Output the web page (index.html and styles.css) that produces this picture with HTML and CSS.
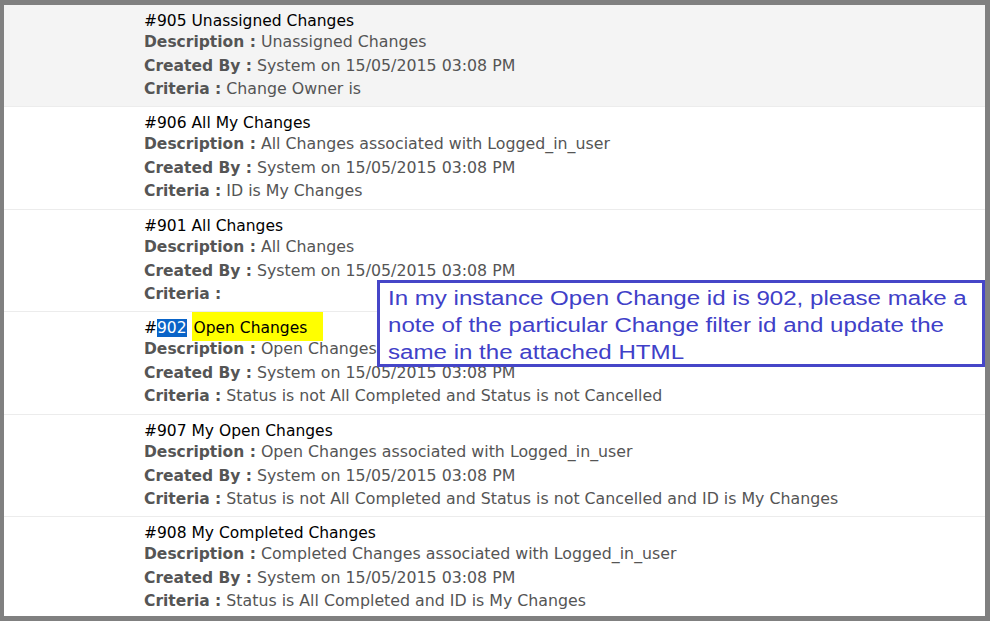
FILE: index.html
```html
<!DOCTYPE html>
<html>
<head>
<meta charset="utf-8">
<link rel="stylesheet" href="styles.css">
</head>
<body>
<div class="frame">
  <ul class="filters">
    <li class="filter shaded">
      <div class="title">#905 Unassigned Changes</div>
      <div class="field"><b>Description :</b> Unassigned Changes</div>
      <div class="field created"><b>Created By :</b> System on 15/05/2015 03:08 PM</div>
      <div class="field criteria"><b>Criteria :</b> Change Owner is</div>
    </li>
    <li class="filter">
      <div class="title">#906 All My Changes</div>
      <div class="field"><b>Description :</b> All Changes associated with Logged_in_user</div>
      <div class="field created"><b>Created By :</b> System on 15/05/2015 03:08 PM</div>
      <div class="field criteria"><b>Criteria :</b> ID is My Changes</div>
    </li>
    <li class="filter">
      <div class="title">#901 All Changes</div>
      <div class="field"><b>Description :</b> All Changes</div>
      <div class="field created"><b>Created By :</b> System on 15/05/2015 03:08 PM</div>
      <div class="field criteria"><b>Criteria :</b></div>
    </li>
    <li class="filter">
      <div class="title">#<span class="selected">902</span> <span class="marked">Open Changes</span></div>
      <div class="field"><b>Description :</b> Open Changes</div>
      <div class="field created"><b>Created By :</b> System on 15/05/2015 03:08 PM</div>
      <div class="field criteria"><b>Criteria :</b> Status is not All Completed and Status is not Cancelled</div>
    </li>
    <li class="filter">
      <div class="title">#907 My Open Changes</div>
      <div class="field"><b>Description :</b> Open Changes associated with Logged_in_user</div>
      <div class="field created"><b>Created By :</b> System on 15/05/2015 03:08 PM</div>
      <div class="field criteria"><b>Criteria :</b> Status is not All Completed and Status is not Cancelled and ID is My Changes</div>
    </li>
    <li class="filter">
      <div class="title">#908 My Completed Changes</div>
      <div class="field"><b>Description :</b> Completed Changes associated with Logged_in_user</div>
      <div class="field created"><b>Created By :</b> System on 15/05/2015 03:08 PM</div>
      <div class="field criteria"><b>Criteria :</b> Status is All Completed and ID is My Changes</div>
    </li>
  </ul>
  <div class="note"><span class="note-text">In my instance Open Change id is 902, please make a note of the particular Change filter id and update the same in the attached HTML</span></div>
</div>
</body>
</html>
```

FILE: styles.css
```css
html, body {
  margin: 0;
  padding: 0;
  background: #808080;
}

.frame {
  position: relative;
  box-sizing: border-box;
  width: 990px;
  height: 621px;
  border-style: solid;
  border-color: #808080;
  border-width: 5px 5px 5px 4px;
  background: #ffffff;
  overflow: hidden;
  font-family: "DejaVu Sans", Verdana, sans-serif;
  font-size: 15.5px;
}

.filters {
  list-style: none;
  margin: 0;
  padding: 0;
}

.filter {
  box-sizing: border-box;
  height: 102px;
  padding: 6px 0 0 140px;
  border-bottom: 1px solid #ececec;
  background: #ffffff;
}

.filter:nth-child(even) {
  height: 103px;
}

.filter.shaded {
  background: #f4f4f4;
}

.title {
  color: #000000;
  line-height: 20px;
  height: 20px;
}

.field {
  color: #555555;
  font-size: 15.8px;
  line-height: 22px;
  white-space: nowrap;
}

.field b {
  color: #555555;
  font-size: 15.5px;
  font-weight: bold;
}

.created {
  margin-top: 2px;
}

.criteria {
  margin-top: 1px;
}

.selected {
  background: #0a64c8;
  color: #ffffff;
}

.marked {
  background: #ffff00;
  padding: 7px 16px 4px 2px;
}

.note {
  position: absolute;
  left: 373px;
  top: 275px;
  width: 608px;
  height: 87px;
  box-sizing: border-box;
  border: 3px solid #4646c8;
  padding: 2px 8px 0 8px;
  background: #ffffff;
  color: #4040c8;
  font-family: "Liberation Sans", Arial, sans-serif;
  font-size: 20px;
  line-height: 27px;
}

.note-text {
  display: block;
  width: 500px;
  transform: scaleX(1.205);
  transform-origin: 0 0;
}
```
